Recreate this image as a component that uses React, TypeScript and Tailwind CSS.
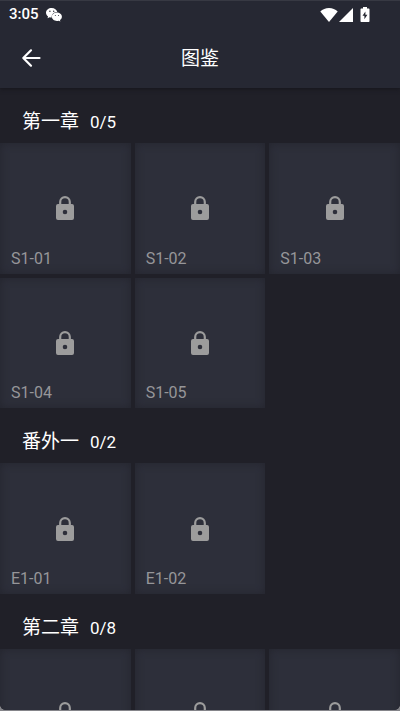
import React from 'react';

const chapters = [
  { title: '第一章', progress: '0/5', items: ['S1-01', 'S1-02', 'S1-03', 'S1-04', 'S1-05'] },
  { title: '番外一', progress: '0/2', items: ['E1-01', 'E1-02'] },
  {
    title: '第二章',
    progress: '0/8',
    items: ['S2-01', 'S2-02', 'S2-03', 'S2-04', 'S2-05', 'S2-06', 'S2-07', 'S2-08'],
  },
];

const WeChatIcon = () => (
  <svg viewBox="0 0 16 14" className="h-[14px] w-4" aria-hidden="true">
    <path
      fill="#fff"
      d="M5.7 0C2.5 0 0 2.1 0 4.8c0 1.5.8 2.8 2.1 3.7l-.6 1.8 2.1-1c.7.2 1.4.3 2.2.3C5.2 6.5 7.6 4 10.9 4h.4C10.8 1.700 8.500 0 5.700 0Z"
    />
    <path
      fill="#fff"
      d="M10.900 4.600c-2.800 0-5 1.900-5 4.200s2.200 4.200 5 4.200c.6 0 1.200-.1 1.800-.3l1.700.9-.5-1.500c1.200-.8 2-1.900 2-3.300 0-2.300-2.300-4.200-5-4.200Z"
    />
    <g fill="#252731">
      <circle cx="3.900" cy="3.300" r=".7" />
      <circle cx="7.700" cy="3.300" r=".7" />
      <circle cx="9.300" cy="7.500" r=".5" />
      <circle cx="12.500" cy="7.500" r=".5" />
    </g>
  </svg>
);

const WifiIcon = () => (
  <svg viewBox="0 0 18 14" className="h-[14px] w-[18px]" aria-hidden="true">
    <path fill="#fff" d="M9 14 .3 3.600C2.600 1.300 5.600 0 9 0s6.400 1.300 8.700 3.600L9 14Z" />
  </svg>
);

const SignalIcon = () => (
  <svg viewBox="0 0 14 14" className="h-[14px] w-[14px]" aria-hidden="true">
    <path fill="#fff" d="M14 0v14H0L14 0Z" />
  </svg>
);

const BatteryIcon = () => (
  <svg viewBox="0 0 10 15" className="h-[15px] w-[10px]" aria-hidden="true">
    <path
      fill="#fff"
      d="M3 0h4v1.500h1.500c.7 0 1 .4 1 1v11.500c0 .6-.4 1-1 1h-7c-.6 0-1-.4-1-1V2.500c0-.6.3-1 1-1H3V0Z"
    />
    <path fill="#252731" d="M5.400 4.500 2.500 8.800h1.900v3.500l3-4.500h-2V4.500Z" />
  </svg>
);

const BackIcon = () => (
  <svg
    viewBox="0 0 20 20"
    className="h-5 w-5"
    fill="none"
    stroke="#fff"
    strokeWidth="2.200"
    strokeLinecap="round"
    strokeLinejoin="round"
    aria-hidden="true"
  >
    <path d="M18.500 10H2.500M10 2.300 2.300 10l7.700 7.700" />
  </svg>
);

const LockIcon = () => (
  <svg viewBox="0 0 18 24" className="h-6 w-[18px]" aria-hidden="true">
    <path d="M4.200 9V5.900a4.800 4.800 0 0 1 9.600 0V9" fill="none" stroke="#9c9c9c" strokeWidth="2.200" />
    <path
      fill="#9c9c9c"
      fillRule="evenodd"
      d="M2 8h14a2 2 0 0 1 2 2v12a2 2 0 0 1-2 2H2a2 2 0 0 1-2-2V10a2 2 0 0 1 2-2Zm7 5.700a2.300 2.300 0 1 0 0 4.600 2.300 2.300 0 0 0 0-4.600Z"
    />
  </svg>
);

const LockedCard = ({ label }: { label: string }) => (
  <button
    type="button"
    className="grid aspect-square grid-rows-[1fr_auto_1fr] justify-items-center bg-[#2d2f3a] shadow-[inset_0_0_8px_#24252e]"
  >
    <span />
    <LockIcon />
    <span className="self-end justify-self-start pb-[3px] pl-[11px] text-base text-[#969699]">{label}</span>
  </button>
);

const App = () => {
  return (
    <div className="h-screen bg-[#85858a] pb-px font-['Roboto','Noto_Sans_CJK_SC',sans-serif]">
      <div className="flex h-full flex-col overflow-hidden rounded-b-md bg-[#202028] text-white">
        <header className="relative z-10 bg-[#262833] shadow-[0_1px_4px_#15151c]">
          {/* Status bar */}
          <div className="flex h-7 items-center border-t border-[#373943] pr-[30px] pl-[9px]">
            <span className="text-[15px] font-medium">3:05</span>
            <span className="ml-[7px]">
              <WeChatIcon />
            </span>
            <div className="ml-auto flex items-center">
              <WifiIcon />
              <span className="ml-px">
                <SignalIcon />
              </span>
              <span className="ml-[7px]">
                <BatteryIcon />
              </span>
            </div>
          </div>

          {/* Title bar */}
          <div className="grid h-[60px] grid-cols-[1fr_auto_1fr] items-center">
            <button type="button" aria-label="返回" className="justify-self-start py-2 pr-2 pl-[21px]">
              <BackIcon />
            </button>
            <h1 className="pt-[3px] text-[19px]">图鉴</h1>
          </div>
        </header>

        <main className="min-h-0 flex-1 overflow-y-auto [scrollbar-width:none]">
          {chapters.map((chapter) => (
            <section key={chapter.title}>
              <div className="flex h-[55px] items-baseline gap-[11px] pt-5 pl-[22px]">
                <h2 className="text-[19px] leading-7">{chapter.title}</h2>
                <span className="text-[17px] leading-7">{chapter.progress}</span>
              </div>
              <div className="grid grid-cols-3 gap-1">
                {chapter.items.map((item) => (
                  <LockedCard key={item} label={item} />
                ))}
              </div>
            </section>
          ))}
        </main>
      </div>
    </div>
  );
};

export default App;
